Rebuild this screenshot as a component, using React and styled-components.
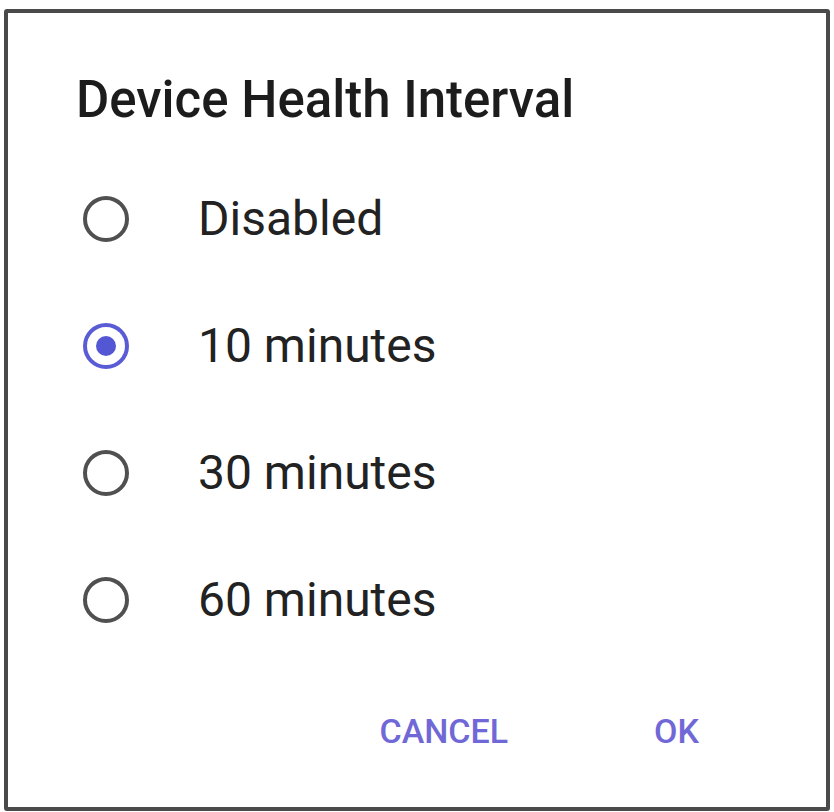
import React, { useState } from 'react'
import styled, { createGlobalStyle } from 'styled-components'

const GlobalStyle = createGlobalStyle`
  html, body {
    margin: 0;
    padding: 0;
    background: #ffffff;
  }
  body {
    font-family: Roboto, "Noto Sans", "Liberation Sans", sans-serif;
  }
`

const Dialog = styled.section`
  box-sizing: border-box;
  width: 826px;
  height: 802px;
  margin: 9px 0 0 4px;
  border: 4px solid #4a4a4a;
  border-radius: 3px;
  background: #ffffff;
  display: flex;
  flex-direction: column;
  padding: 59px 0 0 68px;
`

const Title = styled.h2`
  margin: 0;
  font-size: 51px;
  line-height: 56px;
  font-weight: 500;
  color: #1c1c1c;
`

const Options = styled.div`
  margin-top: 27px;
  display: flex;
  flex-direction: column;
`

const Option = styled.label`
  height: 127px;
  display: flex;
  align-items: center;
  cursor: pointer;
`

const Radio = styled.span`
  box-sizing: border-box;
  width: 46px;
  height: 46px;
  margin-left: 7px;
  border-radius: 50%;
  border: 4px solid ${p => (p.$checked ? '#5a5cd6' : '#505050')};
  display: flex;
  align-items: center;
  justify-content: center;

  &::after {
    content: '';
    width: 20px;
    height: 20px;
    border-radius: 50%;
    background: #5457d4;
    display: ${p => (p.$checked ? 'block' : 'none')};
  }
`

const OptionText = styled.span`
  margin-left: 69px;
  font-size: 48px;
  line-height: 56px;
  color: #222222;
`

const ButtonBar = styled.div`
  margin-top: 38px;
  height: 60px;
  display: flex;
  justify-content: flex-end;
  align-items: center;
  gap: 146px;
  padding-right: 127px;
`

const TextButton = styled.button`
  border: none;
  background: none;
  padding: 0;
  font-family: inherit;
  font-size: 34px;
  font-weight: 500;
  line-height: 40px;
  color: #7068d6;
  cursor: pointer;
`

const intervals = ['Disabled', '10 minutes', '30 minutes', '60 minutes']

const App = () => {
  const [selected, setSelected] = useState('10 minutes')

  return (
    <>
      <GlobalStyle />
      <Dialog>
        <Title>Device Health Interval</Title>
        <Options>
          {intervals.map(item => (
            <Option key={item} onClick={() => setSelected(item)}>
              <Radio $checked={selected === item} />
              <OptionText>{item}</OptionText>
            </Option>
          ))}
        </Options>
        <ButtonBar>
          <TextButton>CANCEL</TextButton>
          <TextButton>OK</TextButton>
        </ButtonBar>
      </Dialog>
    </>
  )
}

export default App
